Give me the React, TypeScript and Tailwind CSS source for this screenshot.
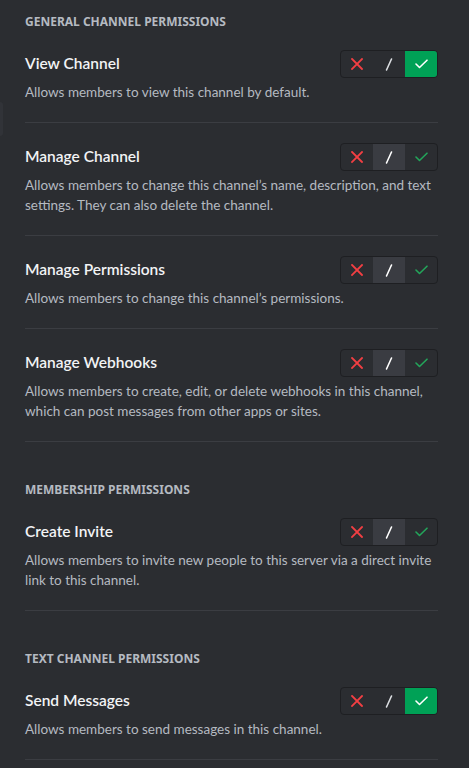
type PermState = "deny" | "neutral" | "allow";

type Permission = {
  name: string;
  desc: string;
  state: PermState;
};

const sections: { title: string; items: Permission[] }[] = [
  {
    title: "General Channel Permissions",
    items: [
      {
        name: "View Channel",
        desc: "Allows members to view this channel by default.",
        state: "allow",
      },
      {
        name: "Manage Channel",
        desc: "Allows members to change this channel’s name, description, and text settings. They can also delete the channel.",
        state: "neutral",
      },
      {
        name: "Manage Permissions",
        desc: "Allows members to change this channel’s permissions.",
        state: "neutral",
      },
      {
        name: "Manage Webhooks",
        desc: "Allows members to create, edit, or delete webhooks in this channel, which can post messages from other apps or sites.",
        state: "neutral",
      },
    ],
  },
  {
    title: "Membership Permissions",
    items: [
      {
        name: "Create Invite",
        desc: "Allows members to invite new people to this server via a direct invite link to this channel.",
        state: "neutral",
      },
    ],
  },
  {
    title: "Text Channel Permissions",
    items: [
      {
        name: "Send Messages",
        desc: "Allows members to send messages in this channel.",
        state: "allow",
      },
    ],
  },
];

const XIcon = () => (
  <svg width="12" height="12" viewBox="0 0 12 12" fill="none">
    <path d="M1 1L11 11M11 1L1 11" stroke="currentColor" strokeWidth="1.8" strokeLinecap="square" />
  </svg>
);

const Slash = () => (
  <svg width="8" height="13" viewBox="0 0 8 13" fill="none">
    <path d="M6.5 1L1.5 12" stroke="currentColor" strokeWidth="1.6" strokeLinecap="round" />
  </svg>
);

const CheckIcon = () => (
  <svg width="13" height="10" viewBox="0 0 13 10" fill="none">
    <path d="M1 5L4.5 8.5L12 1.2" stroke="currentColor" strokeWidth="1.6" strokeLinecap="round" strokeLinejoin="round" />
  </svg>
);

const Toggle = ({ state }: { state: PermState }) => {
  return (
    <div className="flex h-7 w-[98px] shrink-0 overflow-hidden rounded-[4px] border border-[#1e1f22] bg-[#2b2d31]">
      <div
        className={`flex flex-1 items-center justify-center ${
          state === "deny" ? "bg-[#da373c] text-white" : "text-[#f23f43]"
        }`}
      >
        <XIcon />
      </div>
      <div
        className={`flex flex-1 items-center justify-center ${
          state === "neutral" ? "bg-[#3a3c42] text-white" : "text-[#dbdee1]"
        }`}
      >
        <Slash />
      </div>
      <div
        className={`flex flex-1 items-center justify-center ${
          state === "allow" ? "bg-[#00a156] text-white" : "text-[#23a55a]"
        }`}
      >
        <CheckIcon />
      </div>
    </div>
  );
};

export default function App() {
  return (
    <div
      className="relative min-h-screen w-full bg-[#2b2d31] pl-[25px] pr-[31px] pt-[14px]"
      style={{ fontFamily: "Lato, 'Noto Sans', sans-serif" }}
    >
      {/* left scrollbar sliver */}
      <div className="absolute left-0 top-[102px] h-[34px] w-[3px] rounded-r bg-[#313338]"></div>

      {sections.map((section, si) => (
        <div key={section.title} className={si > 0 ? "mt-10" : ""}>
          <h2 className="font-['Noto_Sans',sans-serif] text-xs font-bold uppercase leading-4 text-[#b5bac1]">
            {section.title}
          </h2>
          {section.items.map((item) => (
            <div key={item.name} className="border-b border-[#3b3d42] pt-5 pb-5">
              <div className="flex h-7 items-center justify-between">
                <span className="-mt-0.5 text-[15.5px] font-semibold leading-5 text-[#f2f3f5]">
                  {item.name}
                </span>
                <Toggle state={item.state} />
              </div>
              <p className="mt-1 text-[13.5px] leading-5 text-[#b5bac1]">{item.desc}</p>
            </div>
          ))}
        </div>
      ))}
    </div>
  );
}
